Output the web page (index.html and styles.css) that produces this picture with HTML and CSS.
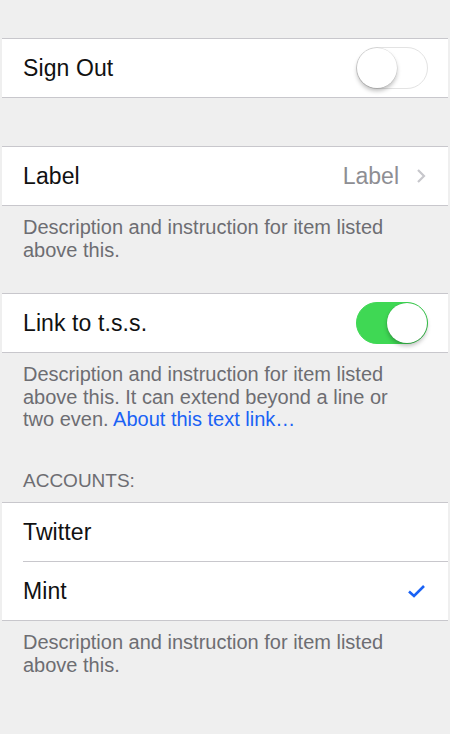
FILE: index.html
```html
<!DOCTYPE html>
<html>
<head>
<meta charset="utf-8">
<link rel="stylesheet" href="styles.css">
</head>
<body>
<div class="page">
  <div class="group first">
    <div class="row">
      <span class="title">Sign Out</span>
      <span class="switch"><span class="knob"></span></span>
    </div>
  </div>

  <div class="group gap">
    <div class="row">
      <span class="title">Label</span>
      <span class="detail">Label</span>
      <svg class="chev" width="10" height="16" viewBox="0 0 10 16"><path d="M2 2 L8 8 L2 14" fill="none" stroke="#c7c7cc" stroke-width="2.2"/></svg>
    </div>
  </div>
  <p class="footer f2">Description and instruction for item listed above this.</p>

  <div class="group">
    <div class="row">
      <span class="title">Link to t.s.s.</span>
      <span class="switch on"><span class="knob"></span></span>
    </div>
  </div>
  <p class="footer f3">Description and instruction for item listed above this. It can extend beyond a line or two even. <a class="link">About this text link…</a></p>

  <div class="header">ACCOUNTS:</div>
  <div class="group">
    <div class="row sep">
      <span class="title">Twitter</span>
    </div>
    <div class="row">
      <span class="title">Mint</span>
      <svg class="check" width="20" height="16" viewBox="0 0 20 16"><path d="M2 8.5 L7 13 L17 3" fill="none" stroke="#1a62f5" stroke-width="2.6"/></svg>
    </div>
  </div>
  <p class="footer f4">Description and instruction for item listed above this.</p>
</div>
</body>
</html>
```
FILE: styles.css
```css
html, body {
  margin: 0;
  padding: 0;
  background: #efefef;
}
body {
  font-family: "Liberation Sans", Arial, sans-serif;
  width: 450px;
  height: 734px;
  overflow: hidden;
}
.page {
  padding-top: 38px;
}
.group {
  margin: 0 2px;
  background: #fff;
  border-top: 1px solid #c8c7cc;
  border-bottom: 1px solid #c8c7cc;
}
.group.gap {
  margin-top: 48px;
}
.row {
  height: 58px;
  display: flex;
  align-items: center;
  padding: 0 21px;
  position: relative;
}
.row.sep {
  height: 59px;
}
.row.sep::after {
  content: "";
  position: absolute;
  left: 21px;
  right: 0;
  bottom: 0;
  height: 1px;
  background: #c8c7cc;
}
.title {
  font-size: 23px;
  color: #111;
  flex: 1;
  letter-spacing: 0.1px;
}
.detail {
  font-size: 23px;
  color: #8e8e93;
  margin-right: 17px;
}
.chev {
  margin-right: 1px;
}
.switch {
  width: 70px;
  height: 40px;
  border-radius: 22px;
  border: 1.5px solid #e3e3e3;
  background: #fff;
  position: relative;
  margin-right: -1px;
}
.switch .knob {
  position: absolute;
  top: 0;
  left: 0;
  width: 40px;
  height: 40px;
  border-radius: 50%;
  background: #fff;
  box-shadow: 0 3px 4px rgba(0,0,0,0.25), 0 0 0 0.5px rgba(0,0,0,0.12);
}
.switch.on {
  background: #3fd854;
  border-color: #3fd854;
}
.switch.on .knob {
  left: 30px;
}
.footer {
  margin: 0;
  padding: 10px 45px 0 23px;
  font-size: 20px;
  line-height: 23px;
  color: #6d6d72;
}
.f2 { height: 77px; }
.f3 { height: 107px; line-height: 22.5px; }
.f4 { height: 60px; }
.link {
  color: #1a62f5;
}
.header {
  padding: 0 23px;
  height: 32px;
  font-size: 19px;
  line-height: 22px;
  color: #6d6d72;
}
.check {
  margin-right: 0;
}
```
